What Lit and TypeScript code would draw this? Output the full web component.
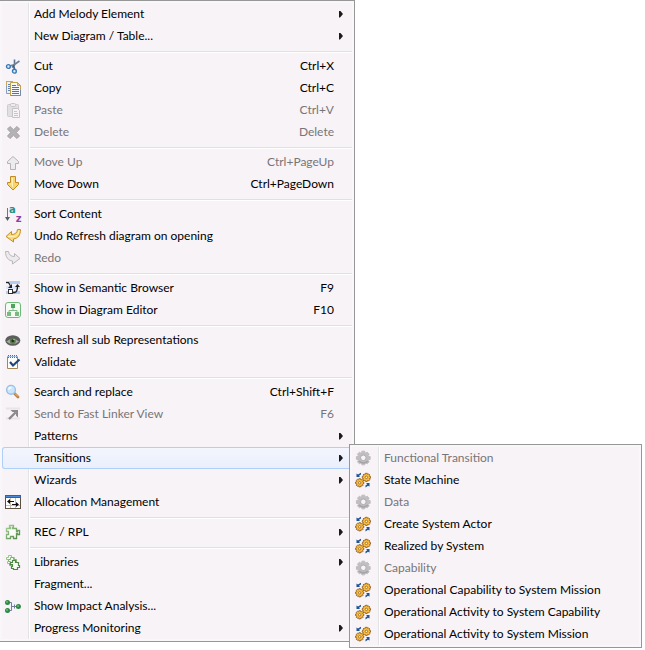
import { LitElement, html, css, svg, nothing, TemplateResult, SVGTemplateResult } from "lit";
import { customElement, property } from "lit/decorators.js";

interface Entry {
  label: string;
  icon?: string;
  keys?: string;
  disabled?: boolean;
  open?: boolean;
  submenu?: boolean;
  children?: Entry[][];
}

const gearPath = (cx: number, cy: number, inner: number, outer: number): string => {
  const pts: string[] = [];
  const teeth = 8;
  for (let i = 0; i < teeth; i++) {
    const a = (i * 2 * Math.PI) / teeth;
    for (const [off, r] of [[-0.3, inner], [-0.2, outer], [0.2, outer], [0.3, inner]]) {
      pts.push(`${(cx + r * Math.cos(a + off)).toFixed(2)} ${(cy + r * Math.sin(a + off)).toFixed(2)}`);
    }
  }
  return `M${pts.join("L")}Z`;
};

const puzzle = "M1.5 4.5H5.5V3.5H4.5V1.5H8.5V3.5H7.5V4.5H11.5V7.5H12.5V6.5H14.5V10.5H12.5V9.5H11.5V14.5H8.5V12.5H5.5V14.5H1.5V10.5H3.5V7.5H1.5Z";

const blob = "M.5 2.5H2.5V.5H5.5V2.5H8.5V5.5H9.5V7.5H7.5V9.5H3.5V8.5H1.5V6.5H2.5V4.5H.5Z";

const icons: Record<string, SVGTemplateResult> = {
  cut: svg`
    <path d="M9.5 1.5L9.5 7L7 9.5" fill="none" stroke="#60748c" stroke-width="1.6"/>
    <path d="M14.5 3L9.5 6.5L5 8" fill="none" stroke="#6f8298" stroke-width="1.7"/>
    <path d="M8.5 7.5L9.5 11" stroke="#31577d" stroke-width="1.6"/>
    <circle cx="3.4" cy="8.5" r="1.9" fill="#dcecfa" stroke="#3a78b5" stroke-width="1.4"/>
    <circle cx="9.4" cy="13.2" r="1.9" fill="#dcecfa" stroke="#3a78b5" stroke-width="1.4"/>`,
  copy: svg`
    <path d="M1.5 1.5H7.5L9.5 3.5V13.5H1.5Z" fill="#eaf1fa" stroke="#8d9db4"/>
    <path d="M1 1.5H8M1.5 1V6" stroke="#c9a75a"/>
    <path d="M3 4.5H5M3 6.5H5M3 8.5H5M3 10.5H5" stroke="#5b83bd"/>
    <path d="M5.5 2.5H12.5L15.5 5.5V15.5H5.5Z" fill="#f5f9ff" stroke="#c2a14e"/>
    <path d="M12.5 2.5V5.5H15.5Z" fill="#e9cd7c" stroke="#c2a14e"/>
    <path d="M7 5.5H11M7 7.5H14M7 9.5H14M7 11.5H14M7 13.5H14" stroke="#4a76b8"/>
    <path d="M5.5 15.5H15.5V10" fill="none" stroke="#7589a8"/>`,
  paste: svg`
    <rect x="2.5" y="2.5" width="11" height="12" rx="1" fill="#e2dfe2" stroke="#cfcccf"/>
    <rect x="5.5" y="1.5" width="5" height="3" rx="1" fill="#eeebee" stroke="#c8c5c8"/>
    <path d="M7.5 6.5H12.5L14.5 8.5V15.5H7.5Z" fill="#f6f4f6" stroke="#c6c3c6"/>
    <path d="M9 9.5H12M9 11.5H13M9 13.5H13" stroke="#c8c5c8"/>`,
  remove: svg`
    <path d="M2.5 5L5 2.5L8.5 5.7L12 2.5L14.500 5L11.300 8.500L14.500 12L12 14.500L8.500 11.300L5 14.500L2.500 12L5.700 8.500Z" fill="#b4b2b4" stroke="#a5a3a5"/>`,
  up: svg`<path d="M8 2.5L13.5 7.5V9.5H10.5V15.5H5.5V9.5H2.5V7.5Z" fill="#edebed" stroke="#b5b2b5"/>`,
  down: svg`
    <path d="M5.5 .5H10.5V6.5H13.5V8.5L8 14L2.5 8.5V6.5H5.5Z" fill="#fbd468" stroke="#c08a24"/>
    <path d="M7 2V8H5M7.5 2V11" fill="none" stroke="#fff0b4"/>`,
  sort: svg`
    <path d="M2.5 2V12" stroke="#5679a5"/>
    <path d="M0 11H5L2.5 15Z" fill="#53606f"/>
    <text x="4" y="6.5" font-family="DejaVu Sans" font-weight="700" font-size="10" fill="#2a8f86">a</text>
    <text x="10.8" y="15.5" font-family="DejaVu Sans" font-weight="700" font-size="10" fill="#8a41a3">z</text>`,
  undo: svg`
    <path d="M1 8.5L6.5 3.5V6.5C10 6.5 12 5 12.5 1.5H15.5C15.5 7 13 10.5 8.5 11V14Z" fill="#fbd977" stroke="#c48f28" stroke-linejoin="round"/>
    <path d="M3 8.5H8C11.5 8.5 13.5 6 14 2.5" fill="none" stroke="#fff2bd"/>`,
  redo: svg`
    <path d="M15 8.5L9.5 3.5V6.5C6 6.5 4 5 3.5 1.5H.5C.5 7 3 10.5 7.5 11V14Z" fill="#eceaec" stroke="#bab7ba" stroke-linejoin="round"/>`,
  semantic: svg`
    <path d="M1 2.5H15M1 12.5H15" stroke="#b3cdf3" stroke-width="3"/>
    <path d="M1 7.5H15" stroke="#dce8fa" stroke-width="3"/>
    <path d="M1 2.5H3.5L5.5 6" fill="none" stroke="#202020" stroke-width="1.2"/>
    <path d="M7 4V8H3Z" fill="#202020"/>
    <rect x="3.5" y="9.5" width="4" height="4" fill="#fff" stroke="#303030"/>
    <path d="M8 12.500H10Q12.500 11.500 12.500 6" fill="none" stroke="#202020" stroke-width="1.300"/>
    <path d="M10 7H15L12.500 4Z" fill="#202020"/>`,
  diagram: svg`
    <rect x=".5" y=".5" width="15" height="15" rx="2.5" fill="#f3fbf3" stroke="#6db978"/>
    <path d="M8 5V8.5M4 11V8.5H12V11" fill="none" stroke="#7fb987"/>
    <rect x="6" y="2" width="4" height="4" fill="#4fa35c"/>
    <rect x="2" y="10" width="4" height="4" fill="#7aba82"/>
    <rect x="10" y="10" width="4" height="4" fill="#7aba82"/>`,
  eye: svg`
    <ellipse cx="7.8" cy="8.5" rx="7.5" ry="5.2" fill="#5d5d5d"/>
    <path d="M1.5 9.5Q7.5 4 14 9.5Q7.5 14.5 1.5 9.5Z" fill="#a5a8a3"/>
    <circle cx="7.8" cy="9" r="3" fill="#587a4b"/>
    <circle cx="7.8" cy="8.8" r="1.4" fill="#1e2a1c"/>
    <circle cx="9" cy="7.6" r=".7" fill="#dfe8dc"/>`,
  validate: svg`
    <path d="M2.5 3V14.5H12.5V3" fill="#fffdf8" stroke="#a68652"/>
    <path d="M3.5 1V4M5.5 1V4M7.5 1V4M9.5 1V4M11.5 1V4" stroke="#3e73b0"/>
    <path d="M2 2.5H13" stroke="#9fc0e4"/>
    <path d="M5 8L8 11.5L14.5 5.5" fill="none" stroke="#1c4680" stroke-width="2.2"/>`,
  search: svg`
    <path d="M9.5 9.5L13 13" stroke="#b98143" stroke-width="2.8" stroke-linecap="round"/>
    <path d="M10 9.5L13 12.5" stroke="#efc184" stroke-width="1"/>
    <circle cx="6" cy="5.8" r="4.4" fill="#cbe5fb" stroke="#9bbfe8" stroke-width="1.4"/>
    <path d="M3.5 5.5Q4 3.5 6.5 3.5" fill="none" stroke="#fff" stroke-width="1.3"/>`,
  send: svg`
    <path d="M1 2.5H15M1 12.5H15" stroke="#e8e5e8" stroke-width="2"/>
    <path d="M4 13L10.5 6.5" stroke="#8b898b" stroke-width="2.4"/>
    <path d="M5.5 4H13V11.5L11 9.5V6H7.5Z" fill="#8b898b"/>
    <path d="M9 5H12V8.5Z" fill="#8b898b"/>`,
  allocation: svg`
    <rect x=".5" y="1.5" width="15" height="13" fill="#fff" stroke="#5b5240"/>
    <rect x="0" y="1" width="16" height="3" fill="#2b62ad"/>
    <path d="M1 2.5H15" stroke="#4b8ad8"/>
    <path d="M5.5 4V14M10.5 4V14M1 11.5H15" stroke="#c8c0ac"/>
    <path d="M3 7.5H9M7 10.5H13" stroke="#101010"/>
    <path d="M5 5V10L2 7.5ZM11 8V13L14 10.5Z" fill="#101010"/>`,
  rec: svg`
    <defs><linearGradient id="leaf" x1="0" y1="0" x2="1" y2="1"><stop offset="0" stop-color="#a5cf98"/><stop offset="1" stop-color="#4d8443"/></linearGradient></defs>
    <path d=${puzzle} fill="#fbfdf9" stroke="url(#leaf)" stroke-width="1.3"/>`,
  libraries: svg`
    <path d=${blob} transform="translate(1 1)" fill="#f5faf3" stroke="#9cc38e"/>
    <path d=${blob} transform="translate(3 3)" fill="#f5faf3" stroke="#80af72"/>
    <path d=${blob} transform="translate(5 6)" fill="#f5faf3" stroke="#508746" stroke-width="1.2"/>`,
  impact: svg`
    <path d="M3 4.5H6.5V12.5H3M6.5 8.5H13M9.5 6.5V10.5" fill="none" stroke="#6e7fa0"/>
    <circle cx="2.5" cy="4.5" r="2.5" fill="#2f8746"/><circle cx="2.5" cy="12.5" r="2.5" fill="#2f8746"/><circle cx="13.4" cy="8.5" r="2.5" fill="#2f8746"/>
    <circle cx="2" cy="4" r="1" fill="#6cbb77"/><circle cx="2" cy="12" r="1" fill="#6cbb77"/><circle cx="13" cy="8" r="1" fill="#6cbb77"/>`,
  gear: svg`
    <path d=${gearPath(8.3, 8, 5.6, 7)} fill="#c0bec0" stroke="#c0bec0" stroke-linejoin="round"/>
    <path d="M4 11Q8 15 13 11" fill="none" stroke="#a5a3a5" stroke-width="1.6"/>
    <circle cx="8.3" cy="7.800" r="2.800" fill="#f7f3f7" stroke="#aeacae"/>`,
  gears: svg`
    <path d=${gearPath(11.4, 5.4, 3.3, 4.2)} fill="#f9bd3e" stroke="#85521a" stroke-width=".8"/>
    <path d=${gearPath(4.7, 10.8, 3.3, 4.2)} fill="#f9bd3e" stroke="#85521a" stroke-width=".8"/>
    <circle cx="11.4" cy="5.4" r="1.2" fill="#fff3d2" stroke="#8c5516" stroke-width=".7"/>
    <circle cx="4.7" cy="10.8" r="1.2" fill="#fff3d2" stroke="#8c5516" stroke-width=".7"/>
    <path d="M1.5 5V1.5L3 2.500L6 .8V2.500L4 3.800L5 5Z" fill="#1d5599"/>
    <path d="M14.500 11V14.500L13 13.700L10.500 15.400V13.600L12.300 12.300L11 11Z" fill="#1d5599"/>`,
};

const transitions: Entry[][] = [[
  { label: "Functional Transition", icon: "gear", disabled: true },
  { label: "State Machine", icon: "gears" },
  { label: "Data", icon: "gear", disabled: true },
  { label: "Create System Actor", icon: "gears" },
  { label: "Realized by System", icon: "gears" },
  { label: "Capability", icon: "gear", disabled: true },
  { label: "Operational Capability to System Mission", icon: "gears" },
  { label: "Operational Activity to System Capability", icon: "gears" },
  { label: "Operational Activity to System Mission", icon: "gears" },
]];

const menu: Entry[][] = [
  [
    { label: "Add Melody Element", submenu: true },
    { label: "New Diagram / Table...", submenu: true },
  ],
  [
    { label: "Cut", icon: "cut", keys: "Ctrl+X" },
    { label: "Copy", icon: "copy", keys: "Ctrl+C" },
    { label: "Paste", icon: "paste", keys: "Ctrl+V", disabled: true },
    { label: "Delete", icon: "remove", keys: "Delete", disabled: true },
  ],
  [
    { label: "Move Up", icon: "up", keys: "Ctrl+PageUp", disabled: true },
    { label: "Move Down", icon: "down", keys: "Ctrl+PageDown" },
  ],
  [
    { label: "Sort Content", icon: "sort" },
    { label: "Undo Refresh diagram on opening", icon: "undo" },
    { label: "Redo", icon: "redo", disabled: true },
  ],
  [
    { label: "Show in Semantic Browser", icon: "semantic", keys: "F9" },
    { label: "Show in Diagram Editor", icon: "diagram", keys: "F10" },
  ],
  [
    { label: "Refresh all sub Representations", icon: "eye" },
    { label: "Validate", icon: "validate" },
  ],
  [
    { label: "Search and replace", icon: "search", keys: "Ctrl+Shift+F" },
    { label: "Send to Fast Linker View", icon: "send", keys: "F6", disabled: true },
    { label: "Patterns", submenu: true },
    { label: "Transitions", submenu: true, open: true, children: transitions },
    { label: "Wizards", submenu: true },
    { label: "Allocation Management", icon: "allocation" },
  ],
  [{ label: "REC / RPL", icon: "rec", submenu: true }],
  [
    { label: "Libraries", icon: "libraries", submenu: true },
    { label: "Fragment..." },
    { label: "Show Impact Analysis...", icon: "impact" },
    { label: "Progress Monitoring", submenu: true },
  ],
];

@customElement("context-menu")
class ContextMenu extends LitElement {
  @property({ attribute: false }) groups: Entry[][] = [];
  @property() name = "";

  static styles = css`
    :host {
      display: block;
      box-sizing: border-box;
      padding: 2px;
      border: 1px solid #979797;
      background: #f9f7f9;
      color: #000;
      font: 12px/22px Lato, "Open Sans", sans-serif;
    }
    .list {
      margin: 0;
      padding: 0;
      list-style: none;
      background: linear-gradient(to right, #f7f3f7 26px, #e2e3e3 26px, #e2e3e3 27px, #fff 27px, #fff 28px, #f7f3f7 28px);
    }
    .row {
      position: relative;
    }
    .separator {
      box-sizing: border-box;
      height: 8px;
      padding: 4px 0 2px 28px;
    }
    .rule {
      height: 1px;
      border-bottom: 1px solid #fff;
      background: #e0e0e2;
    }
    .item {
      display: grid;
      grid-template-columns: 16px 1fr auto 18px;
      align-items: center;
      box-sizing: border-box;
      width: 100%;
      height: 22px;
      padding: 0 0 0 3px;
      border: 0;
      background: none;
      color: inherit;
      font: inherit;
      text-align: left;
      white-space: nowrap;
    }
    .item:disabled {
      color: #787578;
    }
    .open {
      border-radius: 3px;
      background: linear-gradient(#f4f5fd, #e9effc);
      box-shadow: inset 0 0 0 1px #aecff7;
    }
    .icon {
      display: block;
      width: 16px;
      height: 16px;
      overflow: visible;
    }
    .label {
      padding-left: 13px;
    }
    .arrow {
      justify-self: start;
      width: 4px;
      height: 7px;
      margin-left: 5px;
      background: #1a1a1a;
      clip-path: polygon(0 0, 25% 0, 100% 50%, 25% 100%, 0 100%);
    }
    .flyout {
      position: absolute;
      top: -3px;
      left: calc(100% - 3px);
      z-index: 1;
      width: 293px;
    }
  `;

  private renderItem(e: Entry): TemplateResult {
    return html`
      <li class="row" role="none">
        <button class="item ${e.open ? "open" : ""}" role="menuitem" ?disabled=${e.disabled}
          aria-haspopup=${e.submenu ? "menu" : nothing} aria-expanded=${e.submenu ? String(!!e.open) : nothing}>
          <svg class="icon" viewBox="0 0 16 16" aria-hidden="true">${e.icon ? icons[e.icon] : nothing}</svg>
          <span class="label">${e.label}</span>
          <span class="keys">${e.keys ?? nothing}</span>
          ${e.submenu ? html`<span class="arrow"></span>` : nothing}
        </button>
        ${e.children ? html`<context-menu class="flyout" .groups=${e.children} .name=${e.label}></context-menu>` : nothing}
      </li>`;
  }

  render() {
    return html`
      <ul class="list" role="menu" aria-label=${this.name}>
        ${this.groups.map((g, i) => html`
          ${i ? html`<li class="separator" role="separator"><div class="rule"></div></li>` : nothing}
          ${g.map((e) => this.renderItem(e))}`)}
      </ul>`;
  }
}

@customElement("app-root")
class AppRoot extends LitElement {
  static styles = css`
    :host {
      display: block;
      min-height: 100vh;
      background: #fff;
    }
    .main {
      width: 355px;
      border-left: 0;
    }
  `;

  render() {
    return html`<context-menu class="main" .groups=${menu} .name=${"Element actions"}></context-menu>`;
  }
}
